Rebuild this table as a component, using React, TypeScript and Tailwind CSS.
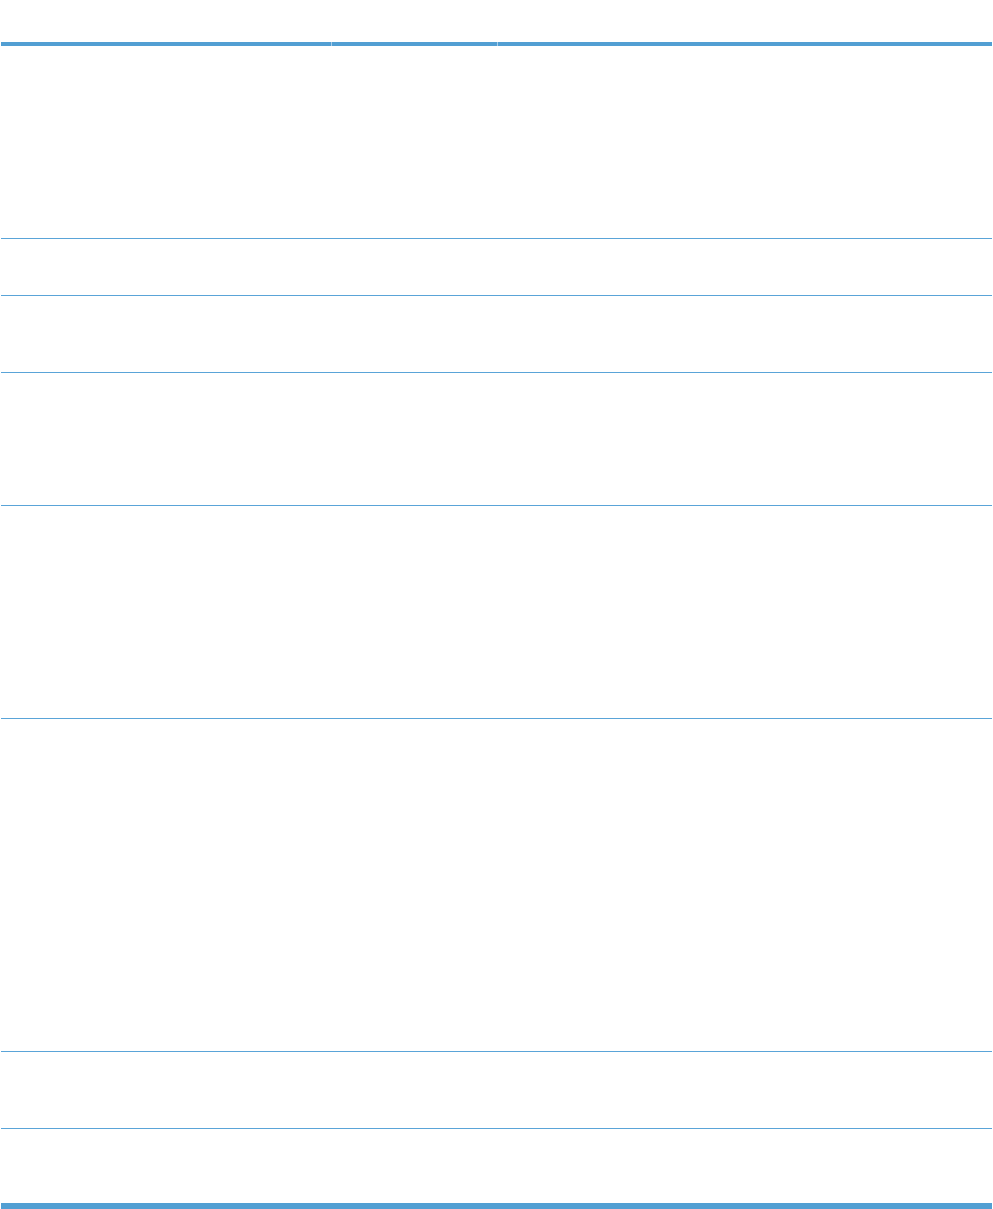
export default function App() {
  const rows = [192, 56, 76, 132, 212, 332, 76, 74];
  return (
    <div className="w-[993px] h-[1209px] bg-white overflow-hidden font-['Liberation_Sans',sans-serif]">
      <div className="pl-[1px] pt-[42px] w-[992px]">
        <div className="flex h-[4px] w-[991px]">
          <div className="w-[330px] bg-[#529fd3]" />
          <div className="w-[166px] bg-[#529fd3] border-l border-[#a9cde9]" />
          <div className="flex-1 bg-[#529fd3] border-l border-[#a9cde9]" />
        </div>
        {rows.map((h, i) => (
          <div
            key={i}
            style={{ height: h + (i < rows.length - 1 ? 1 : 0) }}
            className={i < rows.length - 1 ? "border-b border-[#5aa4d8]" : ""}
          />
        ))}
        <div className="h-[6px] w-[991px] bg-[#529fd3]" />
      </div>
    </div>
  );
}
